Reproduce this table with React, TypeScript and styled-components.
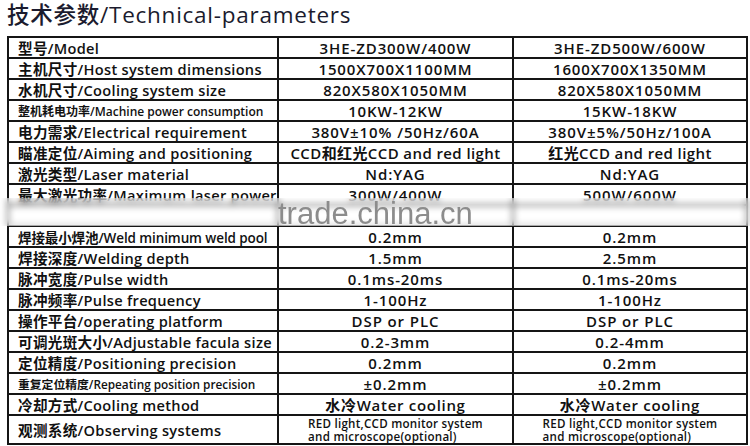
import React from "react";
import styled, { createGlobalStyle } from "styled-components";

const Global = createGlobalStyle`
  html, body { margin: 0; padding: 0; background: #fff; }
  body { width: 750px; height: 446px; overflow: hidden; }
`;

const Page = styled.div`
  position: relative;
  width: 750px;
  height: 446px;
  background: #fff;
  font-family: "Open Sans", "Noto Sans CJK SC", sans-serif;
  color: #111;
`;

const Title = styled.h1`
  margin: 0;
  padding: 0 0 0 7px;
  height: 36px;
  line-height: 30px;
  font-size: 22.5px;
  font-weight: 500;
  color: #1b1b2e;
  font-family: "Open Sans", "Noto Sans CJK SC", sans-serif;
  letter-spacing: 0.75px;
  white-space: nowrap;
`;

const Grid = styled.div`
  margin-left: 7px;
  width: 741px;
  display: grid;
  grid-template-columns: 268px 233px 232px;
  gap: 2px;
  padding: 2px;
  box-sizing: border-box;
  background: #151515;
`;

const Label = styled.div<{ $h?: number; $size?: number; $ls?: number }>`
  background: #fff;
  height: ${(p) => p.$h ?? 19}px;
  display: flex;
  align-items: center;
  padding-left: 9px;
  font-size: ${(p) => p.$size ?? 14.6}px;
  font-weight: 600;
  white-space: nowrap;
  overflow: hidden;
  letter-spacing: ${(p) => p.$ls ?? 0.3}px;
`;

const Value = styled.div<{ $h?: number; $ls?: number }>`
  background: #fff;
  height: ${(p) => p.$h ?? 19}px;
  display: flex;
  align-items: center;
  justify-content: center;
  font-size: 15px;
  font-weight: 600;
  white-space: nowrap;
  overflow: hidden;
  letter-spacing: ${(p) => p.$ls ?? 0.9}px;
`;

const Multi = styled.div`
  font-size: 11.6px;
  font-weight: 600;
  line-height: 13px;
  text-align: left;
  letter-spacing: 0.25px;
`;

const Band = styled.div`
  position: absolute;
  left: 0;
  top: 198px;
  width: 750px;
  height: 28px;
  backdrop-filter: blur(3px);
  background: rgba(255, 255, 255, 0.35);
`;

const Watermark = styled.div`
  position: absolute;
  left: 278px;
  top: 196px;
  font-family: "Liberation Sans", Arial, sans-serif;
  font-size: 31px;
  color: #8c8c8c;
`;

type Row = {
  label: string;
  a: string;
  b: string;
  size?: number;
  ls?: number;
  vls?: number;
  h?: number;
  multi?: boolean;
};

const rows: Row[] = [
  { label: "型号/Model", a: "3HE-ZD300W/400W", b: "3HE-ZD500W/600W" },
  { label: "主机尺寸/Host system dimensions", a: "1500X700X1100MM", b: "1600X700X1350MM" },
  { label: "水机尺寸/Cooling system size", a: "820X580X1050MM", b: "820X580X1050MM" },
  { label: "整机耗电功率/Machine power consumption", a: "10KW-12KW", b: "15KW-18KW", size: 12, ls: 0 },
  { label: "电力需求/Electrical requirement", a: "380V±10% /50Hz/60A", b: "380V±5%/50Hz/100A" },
  { label: "瞄准定位/Aiming and positioning", a: "CCD和红光CCD and red light", b: "红光CCD and red light", vls: 0.4 },
  { label: "激光类型/Laser material", a: "Nd:YAG", b: "Nd:YAG" },
  { label: "最大激光功率/Maximum laser power", a: "300W/400W", b: "500W/600W" },
  { label: "", a: "", b: "" },
  { label: "焊接最小焊池/Weld minimum weld pool", a: "0.2mm", b: "0.2mm", size: 13.5, ls: -0.1 },
  { label: "焊接深度/Welding depth", a: "1.5mm", b: "2.5mm" },
  { label: "脉冲宽度/Pulse width", a: "0.1ms-20ms", b: "0.1ms-20ms" },
  { label: "脉冲频率/Pulse frequency", a: "1-100Hz", b: "1-100Hz" },
  { label: "操作平台/operating platform", a: "DSP or PLC", b: "DSP or PLC" },
  { label: "可调光斑大小/Adjustable facula size", a: "0.2-3mm", b: "0.2-4mm" },
  { label: "定位精度/Positioning precision", a: "0.2mm", b: "0.2mm" },
  { label: "重复定位精度/Repeating position precision", a: "±0.2mm", b: "±0.2mm", size: 11.8, ls: 0 },
  { label: "冷却方式/Cooling method", a: "水冷Water cooling", b: "水冷Water  cooling", vls: 0.7 },
  { label: "观测系统/Observing systems", a: "", b: "", h: 27, multi: true },
];

const Observe = () => (
  <Multi>
    RED light,CCD monitor system
    <br />
    and microscope(optional)
  </Multi>
);

export default function App() {
  return (
    <Page>
      <Global />
      <Title>技术参数/Technical-parameters</Title>
      <Grid>
        {rows.map((r, i) => (
          <React.Fragment key={i}>
            <Label $size={r.size} $ls={r.ls} $h={r.h}>
              {r.label}
            </Label>
            <Value $h={r.h} $ls={r.vls}>
              {r.multi ? <Observe /> : r.a}
            </Value>
            <Value $h={r.h} $ls={r.vls}>
              {r.multi ? <Observe /> : r.b}
            </Value>
          </React.Fragment>
        ))}
      </Grid>
      <Band />
      <Watermark>trade.china.cn</Watermark>
    </Page>
  );
}
